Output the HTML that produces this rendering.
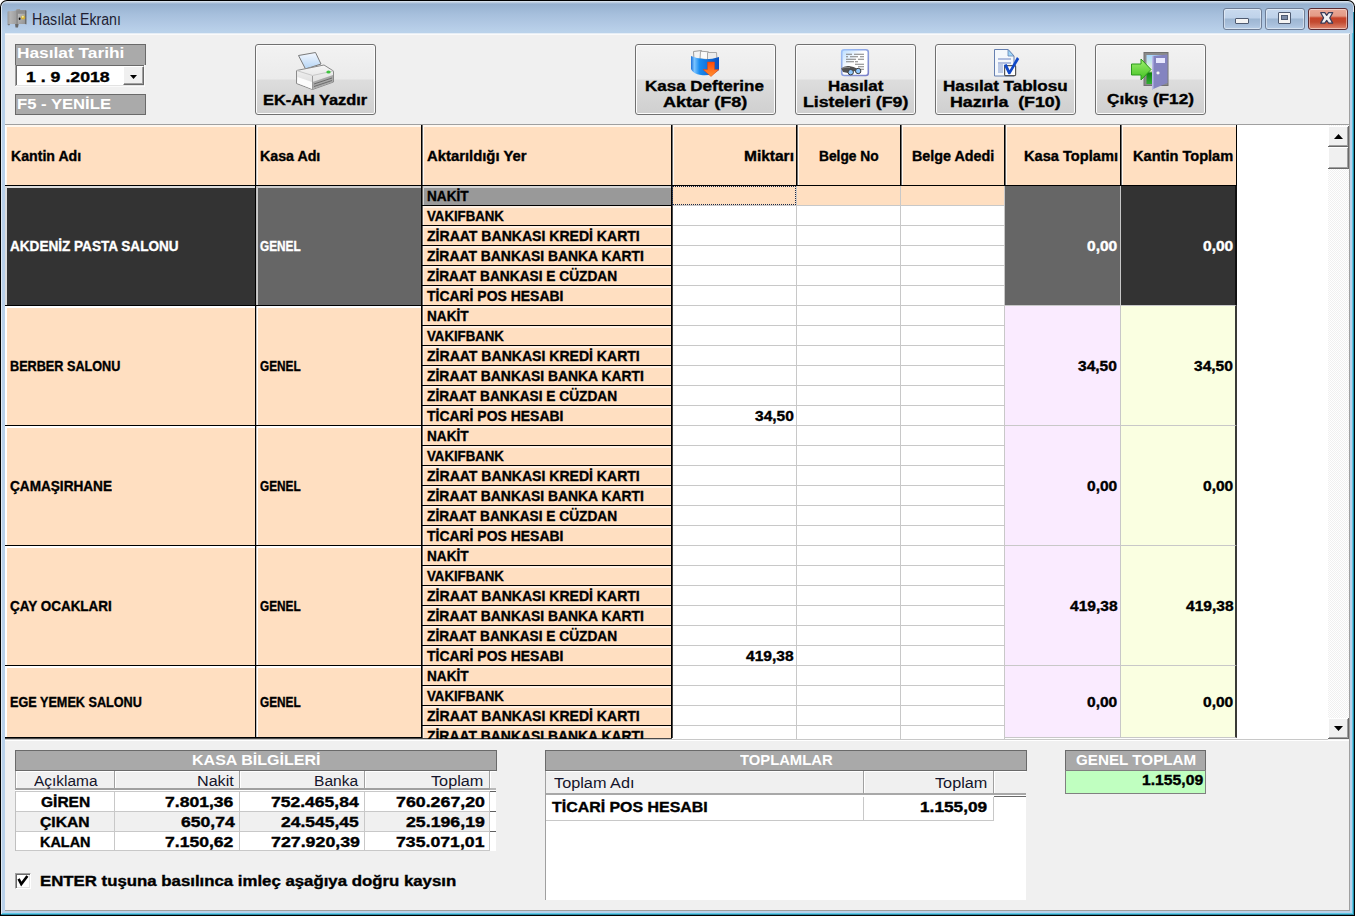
<!DOCTYPE html><html><head><meta charset="utf-8"><style>html,body{margin:0;padding:0;width:1355px;height:916px;overflow:hidden;background:#fff}body div,body svg{position:absolute}body{font-family:'Liberation Sans',sans-serif}</style></head><body>
<div style="left:0;top:0;width:1355px;height:916px;background:#000;border-radius:7px 7px 0 0"></div>
<div style="left:1px;top:1px;width:1353px;height:914px;background:#d5e0ec;border-radius:6px 6px 0 0"></div>
<div style="left:2px;top:2px;width:1351px;height:913px;background:#b9d1ea;border-radius:5px 5px 0 0"></div>
<div style="left:1352px;top:24px;width:1px;height:890px;background:#5ec8e6"></div>
<div style="left:1353px;top:12px;width:1px;height:903px;background:#2a8ca8"></div>
<div style="left:2px;top:913px;width:1351px;height:1px;background:#5ec8e6"></div>
<div style="left:1px;top:914px;width:1353px;height:1px;background:#2a8ca8"></div>
<div style="left:0px;top:915px;width:1355px;height:1px;background:#000"></div>
<div style="left:1354px;top:6px;width:1px;height:910px;background:#000"></div>
<div style="left:1px;top:6px;width:1px;height:908px;background:#dfe8f1"></div>
<div style="left:2px;top:2px;width:1351px;height:31px;border-radius:5px 5px 0 0;background:linear-gradient(#c9d7e6 0px,#97b1cf 2px,#a6bfdc 12px,#b4cbe6 24px,#bad2ea 30px)"></div>
<div style="left:5px;top:33px;width:1345px;height:1px;background:#e6eef6"></div>
<svg style="left:6px;top:8px" width="22" height="21" viewBox="0 0 22 21">
<defs>
<linearGradient id="sg" x1="0" x2="1"><stop offset="0" stop-color="#9a9a9a"/><stop offset=".15" stop-color="#b4b4b4"/><stop offset=".5" stop-color="#9c9c9c"/><stop offset="1" stop-color="#8a8a8a"/></linearGradient>
<linearGradient id="sd" x1="0" y1="0" x2="1" y2="1"><stop offset="0" stop-color="#bcbcbc"/><stop offset="1" stop-color="#949494"/></linearGradient>
</defs>
<path d="M9 15.8 L12.7 15.8 L12 19.5 L9.5 19.5 Z" fill="#6a6a6a"/>
<path d="M1.5 16 L4 16 L3.5 17.3 L2 17.3 Z" fill="#7a7a7a"/>
<path d="M1.5 4 Q1.5 3.2 2.5 3.2 L8 3 L10.3 2.2 L10.5 1 L14 1 L14.3 2.2 L19.5 2.2 Q20.3 2.2 20.3 3 L20.3 16 L1.5 16 Z" fill="url(#sg)"/>
<path d="M10.3 2.6 L20 2.3 L20 16 L10.3 16 Z" fill="#8e8e8e"/>
<rect x="12" y="5.8" width="6.8" height="10.2" fill="url(#sd)"/>
<path d="M19.3 2.5 L20.3 2.5 L20.3 16.5 L19.3 16 Z" fill="#5e5e5e"/>
<ellipse cx="13.6" cy="10.8" rx=".9" ry="1.3" fill="#111"/>
<circle cx="17.1" cy="9.4" r="2" fill="#d8b030"/>
<circle cx="16.8" cy="8.8" r="1" fill="#f4eea0"/>
</svg>
<div style="left:1223px;top:8px;width:37px;height:20px;border:1px solid #6e7d95;border-radius:3px;background:linear-gradient(#c9daee 0px,#bed2ea 9px,#9db6d2 10px,#a9c0dc 16px,#bcd2ea 21px);box-shadow:inset 0 0 0 1px rgba(255,255,255,.45)"></div>
<div style="left:1265px;top:8px;width:38px;height:20px;border:1px solid #6e7d95;border-radius:3px;background:linear-gradient(#c9daee 0px,#bed2ea 9px,#9db6d2 10px,#a9c0dc 16px,#bcd2ea 21px);box-shadow:inset 0 0 0 1px rgba(255,255,255,.45)"></div>
<div style="left:1308px;top:8px;width:38px;height:20px;border:1px solid #5a2b32;border-radius:3px;background:linear-gradient(#eaa998 0px,#e49a86 7px,#c7432a 9px,#c24a30 13px,#d8775f 18px,#e79a84 21px);box-shadow:inset 0 0 0 1px rgba(255,255,255,.45)"></div>
<div style="left:1235px;top:18px;width:12px;height:4px;background:#f4f4f4;border:1px solid #4e5a70;border-radius:1px"></div>
<div style="left:1278px;top:12px;width:11px;height:10px;border:1px solid #4e5a70;background:#f4f4f4;border-radius:1px"></div>
<div style="left:1281px;top:15px;width:5px;height:3px;background:#7d8ca6;border:1px solid #4e5a70"></div>
<svg style="left:1316px;top:8px" width="22" height="20" viewBox="0 0 22 20">
<g transform="translate(10.7 9.9)">
<path d="M-6 -5.2 L-1.9 -5.2 L0 -2.5 L1.9 -5.2 L6 -5.2 L3.1 0 L6 5.2 L1.9 5.2 L0 2.5 L-1.9 5.2 L-6 5.2 L-3.1 0 Z" fill="#f2f2f2" stroke="#3c3c58" stroke-width="1.2" stroke-linejoin="round"/>
</g></svg>
<div style="left:5px;top:34px;width:1345px;height:877px;background:#f0f0f0"></div>
<div style="left:1349px;top:34px;width:1px;height:877px;background:#a0a0a0"></div>
<div style="left:5px;top:910px;width:1345px;height:1px;background:#a0a0a0"></div>
<div style="left:5px;top:34px;width:1344px;height:1px;background:#fafafa"></div>
<div style="left:15px;top:44px;width:129px;height:20px;background:#aaaaaa;border:1px solid #6a6a6a;border-bottom:none"></div>
<div style="left:15px;top:65px;width:129px;height:21px;background:#fff"></div>
<div style="left:15px;top:65px;width:129px;height:1px;background:#696969"></div>
<div style="left:15px;top:65px;width:1px;height:21px;background:#a0a0a0"></div>
<div style="left:16px;top:66px;width:1px;height:19px;background:#696969"></div>
<div style="left:16px;top:85px;width:128px;height:1px;background:#e3e3e3"></div>
<div style="left:15px;top:86px;width:130px;height:1px;background:#fafafa"></div>
<div style="left:144px;top:65px;width:1px;height:22px;background:#fafafa"></div>
<div style="left:123px;top:66px;width:21px;height:19px;background:#f0f0f0;box-sizing:border-box;border-top:1px solid #fff;border-left:1px solid #fff;border-right:1px solid #696969;border-bottom:1px solid #696969;box-shadow:inset -1px -1px 0 #a0a0a0"></div>
<svg style="left:130px;top:75px" width="8" height="5" viewBox="0 0 8 5"><path d="M0 0 H7 L3.5 4 Z" fill="#000"/></svg>
<div style="left:15px;top:94px;width:129px;height:19px;background:#aaaaaa;border:1px solid #6a6a6a"></div>
<div style="left:255px;top:44px;width:119px;height:69px;border:1px solid #707070;border-radius:3px;background:linear-gradient(#f2f2f2 0px,#ebebeb 34px,#dddddd 35px,#cfcfcf 69px);box-shadow:inset 0 0 0 1px #fcfcfc"></div>
<div style="left:635px;top:44px;width:139px;height:69px;border:1px solid #707070;border-radius:3px;background:linear-gradient(#f2f2f2 0px,#ebebeb 34px,#dddddd 35px,#cfcfcf 69px);box-shadow:inset 0 0 0 1px #fcfcfc"></div>
<div style="left:795px;top:44px;width:119px;height:69px;border:1px solid #707070;border-radius:3px;background:linear-gradient(#f2f2f2 0px,#ebebeb 34px,#dddddd 35px,#cfcfcf 69px);box-shadow:inset 0 0 0 1px #fcfcfc"></div>
<div style="left:935px;top:44px;width:139px;height:69px;border:1px solid #707070;border-radius:3px;background:linear-gradient(#f2f2f2 0px,#ebebeb 34px,#dddddd 35px,#cfcfcf 69px);box-shadow:inset 0 0 0 1px #fcfcfc"></div>
<div style="left:1095px;top:44px;width:109px;height:69px;border:1px solid #707070;border-radius:3px;background:linear-gradient(#f2f2f2 0px,#ebebeb 34px,#dddddd 35px,#cfcfcf 69px);box-shadow:inset 0 0 0 1px #fcfcfc"></div>
<svg style="left:294px;top:50px" width="42" height="42" viewBox="0 0 42 42">
<defs>
<linearGradient id="pp" x1="0" y1="0" x2="0" y2="1"><stop offset="0" stop-color="#f4f8ff"/><stop offset="1" stop-color="#b4d4f4"/></linearGradient>
<linearGradient id="pb" x1="0" y1="0" x2="0" y2="1"><stop offset="0" stop-color="#f6f6f6"/><stop offset="1" stop-color="#d6d6d6"/></linearGradient>
</defs>
<path d="M4.5 5.5 L21.5 2.5 L27 14 L11.5 19 Z" fill="url(#pp)" stroke="#7a7a7a" stroke-width="1"/>
<path d="M2.5 20.5 L30 15 L39.5 21 L39.5 32 L18.5 39.5 L2.5 33.5 Z" fill="url(#pb)" stroke="#8a8a8a" stroke-width="1"/>
<path d="M2.5 20.5 L18.5 25.5 L39.5 21" fill="none" stroke="#c8c8c8" stroke-width="1"/>
<path d="M3.5 27 L18 32 L18 39 L3 33 Z" fill="#fcfcfc"/>
<path d="M18.5 32 L39 25 L39 32 L18.5 39 Z" fill="#a8a8a8"/>
<path d="M20 34 L38 28 M20 36.5 L38 30.5" stroke="#6c6c6c" stroke-width="1"/>
<path d="M18.5 26 L18.5 39.5" stroke="#9a9a9a" stroke-width="1"/>
<ellipse cx="34.5" cy="22" rx="2.2" ry="1.6" fill="#3ec43e"/>
</svg>
<svg style="left:689px;top:48px" width="32" height="30" viewBox="0 0 32 30">
<defs>
<linearGradient id="kb" x1="0" y1="0" x2="1" y2="0"><stop offset="0" stop-color="#1c6fd8"/><stop offset=".12" stop-color="#7cc4ff"/><stop offset=".3" stop-color="#1a8cf0"/><stop offset="1" stop-color="#0a50c0"/></linearGradient>
<linearGradient id="ka" x1="0" y1="0" x2="0" y2="1"><stop offset="0" stop-color="#ff4a08"/><stop offset="1" stop-color="#ff9030"/></linearGradient>
</defs>
<path d="M4.5 3.5 L12.5 2.5 L13 11 L5 12 Z" fill="#f4f4f4" stroke="#9c9c9c" stroke-width="1"/>
<path d="M11.5 3.2 L19.5 3.8 L19 11.5 L11 11 Z" fill="#fafafa" stroke="#a4a4a4" stroke-width="1"/>
<path d="M18.5 4.5 L27.5 4.5 L28 12 L18.5 12 Z" fill="#ececec" stroke="#a8a8a8" stroke-width="1"/>
<path d="M2 8 Q15 14 30 9 L30 22 Q22 28.5 12 27 Q4 26 2 21 Z" fill="url(#kb)"/>
<path d="M18.5 14 L25.5 14 L25.5 21.5 L30 21.5 L22 28.5 L14 21.5 L18.5 21.5 Z" fill="url(#ka)" stroke="#e04010" stroke-width=".5"/>
</svg>
<svg style="left:840px;top:48px" width="31" height="30" viewBox="0 0 31 30">
<defs><linearGradient id="ld" x1="0" y1="0" x2="1" y2="1"><stop offset="0" stop-color="#b8dcff"/><stop offset=".45" stop-color="#ffffff"/></linearGradient>
<linearGradient id="lb" x1="0" y1="0" x2="1" y2="1"><stop offset="0" stop-color="#9cc0f8"/><stop offset="1" stop-color="#7a80c8"/></linearGradient></defs>
<rect x="1.7" y="1.7" width="26.6" height="25.8" rx="2.5" fill="url(#ld)" stroke="url(#lb)" stroke-width="1.6"/>
<path d="M6 6.2 H12 M14 6.2 H24 M6 8.7 H8 M10 8.7 H18 M20 8.7 H24 M6 11.3 H16 M18 11.3 H24 M6 13.7 H14 M15 13.7 H18 M15 16.3 H24 M18 18.8 H24 M20 21.3 H24" stroke="#808080" stroke-width="1.1"/>
<path d="M1.2 20.5 Q4 17.5 9 18 Q14 18.5 17 20.5 L15 23 L8 25 L3 24 Z" fill="#505050"/>
<path d="M2 20 Q6 19 10 19.5" stroke="#9a9a9a" stroke-width=".8" fill="none"/>
<circle cx="10.7" cy="24.2" r="2.7" fill="#90c8ff" stroke="#3a3a3a" stroke-width="1"/>
<circle cx="18.2" cy="23" r="2.7" fill="#90c8ff" stroke="#3a3a3a" stroke-width="1"/>
</svg>
<svg style="left:992px;top:48px" width="30" height="30" viewBox="0 0 30 30">
<path d="M2.5 1.5 L16 1.5 L22 8 L22 28 L2.5 28 Z" fill="#f4f8fc" stroke="#6680b0" stroke-width="1"/>
<path d="M16 1.5 L16 8 L22 8 Z" fill="#9fd8f8" stroke="#6680b0" stroke-width=".8"/>
<path d="M6 11 H19 M6 15 H19" stroke="#b0bedf" stroke-width="2"/>
<rect x="6" y="16" width="5" height="9" fill="#bccae6"/>
<rect x="12.6" y="17.6" width="11" height="10" rx=".8" fill="#fff" stroke="#555" stroke-width="1.2"/>
<path d="M11.8 17 L14.6 16 L17.6 22.2 L25 9 L27.2 11 L18.2 26.2 L16.4 26.2 Z" fill="#1048c8"/>
</svg>
<svg style="left:1130px;top:51px" width="40" height="40" viewBox="0 0 40 40">
<defs>
<linearGradient id="ga" x1="0" y1="0" x2="0" y2="1"><stop offset="0" stop-color="#a0f070"/><stop offset="1" stop-color="#40c020"/></linearGradient>
<linearGradient id="op" x1="0" y1="0" x2="0" y2="1"><stop offset="0" stop-color="#a8d8ff"/><stop offset=".55" stop-color="#f0f8d0"/><stop offset=".62" stop-color="#108010"/><stop offset="1" stop-color="#30b030"/></linearGradient>
</defs>
<rect x="14" y="1.5" width="24" height="33" fill="#8a8a8a" stroke="#707070"/>
<rect x="16.5" y="4" width="19" height="29" fill="url(#op)"/>
<path d="M22 5 L37.5 3.5 L37.5 32 L22 38.5 Z" fill="#8484c0"/>
<path d="M22 5 L23.5 5 L23.5 38 L22 38.5 Z" fill="#b8b8e8"/>
<rect x="26" y="7" width="9" height="5" fill="#e8e8ff"/>
<ellipse cx="28" cy="22" rx="1.6" ry="1.4" fill="#f4f4f4"/>
<path d="M1.5 13 L11 13 L11 8 L21 18.5 L11 29 L11 24 L1.5 24 Z" fill="url(#ga)" stroke="#2c9a1c" stroke-width="1"/>
</svg>
<div style="left:5px;top:124px;width:1345px;height:1px;background:#a0a0a0"></div>
<div style="left:5px;top:125px;width:1323px;height:614px;background:#fff"></div>
<div style="left:5px;top:125px;width:1344px;height:614px;overflow:hidden" id="g">
<div style="left:0px;top:0px;width:251px;height:61px;background:#ffdfc1;border-right:1px solid #000;border-bottom:1px solid #000;box-sizing:border-box;box-shadow:inset 1px 0 0 #ffffff,inset 2px 2px 0 #fff8f0"></div>
<div style="left:251px;top:0px;width:166px;height:61px;background:#ffdfc1;border-right:1px solid #000;border-bottom:1px solid #000;box-sizing:border-box;box-shadow:inset 1px 0 0 #c8c8c8,inset 2px 2px 0 #fff8f0"></div>
<div style="left:417px;top:0px;width:250px;height:61px;background:#ffdfc1;border-right:1px solid #000;border-bottom:1px solid #000;box-sizing:border-box;box-shadow:inset 1px 0 0 #707070,inset 2px 2px 0 #fff8f0"></div>
<div style="left:667px;top:0px;width:125px;height:61px;background:#ffdfc1;border-right:1px solid #000;border-bottom:1px solid #000;box-sizing:border-box;box-shadow:inset 1px 0 0 #707070,inset 2px 2px 0 #fff8f0"></div>
<div style="left:792px;top:0px;width:104px;height:61px;background:#ffdfc1;border-right:1px solid #000;border-bottom:1px solid #000;box-sizing:border-box;box-shadow:inset 1px 0 0 #707070,inset 2px 2px 0 #fff8f0"></div>
<div style="left:896px;top:0px;width:104px;height:61px;background:#ffdfc1;border-right:1px solid #000;border-bottom:1px solid #000;box-sizing:border-box;box-shadow:inset 1px 0 0 #707070,inset 2px 2px 0 #fff8f0"></div>
<div style="left:1000px;top:0px;width:116px;height:61px;background:#ffdfc1;border-right:1px solid #000;border-bottom:1px solid #000;box-sizing:border-box;box-shadow:inset 1px 0 0 #707070,inset 2px 2px 0 #fff8f0"></div>
<div style="left:1116px;top:0px;width:116px;height:61px;background:#ffdfc1;border-right:1px solid #000;border-bottom:1px solid #000;box-sizing:border-box;box-shadow:inset 1px 0 0 #707070,inset 2px 2px 0 #fff8f0"></div>
<div style="left:667px;top:61px;width:125px;height:20px;background:#ffdfc1;border-right:1px solid #c8c8c8;border-bottom:1px solid #c8c8c8;box-sizing:border-box"></div>
<div style="left:792px;top:61px;width:104px;height:20px;background:#ffdfc1;border-right:1px solid #c8c8c8;border-bottom:1px solid #c8c8c8;box-sizing:border-box"></div>
<div style="left:896px;top:61px;width:104px;height:20px;background:#ffdfc1;border-right:1px solid #c8c8c8;border-bottom:1px solid #c8c8c8;box-sizing:border-box"></div>
<div style="left:417px;top:61px;width:250px;height:20px;background:#999999;border-right:1px solid #000;border-bottom:1px solid #000;box-sizing:border-box;box-shadow:inset 1px 0 0 #606060,inset 2px 2px 0 #d4d4d4"></div>
<div style="left:667px;top:81px;width:125px;height:20px;background:#fff;border-right:1px solid #c8c8c8;border-bottom:1px solid #c8c8c8;box-sizing:border-box"></div>
<div style="left:792px;top:81px;width:104px;height:20px;background:#fff;border-right:1px solid #c8c8c8;border-bottom:1px solid #c8c8c8;box-sizing:border-box"></div>
<div style="left:896px;top:81px;width:104px;height:20px;background:#fff;border-right:1px solid #c8c8c8;border-bottom:1px solid #c8c8c8;box-sizing:border-box"></div>
<div style="left:417px;top:81px;width:250px;height:20px;background:#ffdfc1;border-right:1px solid #000;border-bottom:1px solid #000;box-sizing:border-box;box-shadow:inset 1px 0 0 #606060,inset 2px 2px 0 #fff1e4"></div>
<div style="left:667px;top:101px;width:125px;height:20px;background:#fff;border-right:1px solid #c8c8c8;border-bottom:1px solid #c8c8c8;box-sizing:border-box"></div>
<div style="left:792px;top:101px;width:104px;height:20px;background:#fff;border-right:1px solid #c8c8c8;border-bottom:1px solid #c8c8c8;box-sizing:border-box"></div>
<div style="left:896px;top:101px;width:104px;height:20px;background:#fff;border-right:1px solid #c8c8c8;border-bottom:1px solid #c8c8c8;box-sizing:border-box"></div>
<div style="left:417px;top:101px;width:250px;height:20px;background:#ffdfc1;border-right:1px solid #000;border-bottom:1px solid #000;box-sizing:border-box;box-shadow:inset 1px 0 0 #606060,inset 2px 2px 0 #fff1e4"></div>
<div style="left:667px;top:121px;width:125px;height:20px;background:#fff;border-right:1px solid #c8c8c8;border-bottom:1px solid #c8c8c8;box-sizing:border-box"></div>
<div style="left:792px;top:121px;width:104px;height:20px;background:#fff;border-right:1px solid #c8c8c8;border-bottom:1px solid #c8c8c8;box-sizing:border-box"></div>
<div style="left:896px;top:121px;width:104px;height:20px;background:#fff;border-right:1px solid #c8c8c8;border-bottom:1px solid #c8c8c8;box-sizing:border-box"></div>
<div style="left:417px;top:121px;width:250px;height:20px;background:#ffdfc1;border-right:1px solid #000;border-bottom:1px solid #000;box-sizing:border-box;box-shadow:inset 1px 0 0 #606060,inset 2px 2px 0 #fff1e4"></div>
<div style="left:667px;top:141px;width:125px;height:20px;background:#fff;border-right:1px solid #c8c8c8;border-bottom:1px solid #c8c8c8;box-sizing:border-box"></div>
<div style="left:792px;top:141px;width:104px;height:20px;background:#fff;border-right:1px solid #c8c8c8;border-bottom:1px solid #c8c8c8;box-sizing:border-box"></div>
<div style="left:896px;top:141px;width:104px;height:20px;background:#fff;border-right:1px solid #c8c8c8;border-bottom:1px solid #c8c8c8;box-sizing:border-box"></div>
<div style="left:417px;top:141px;width:250px;height:20px;background:#ffdfc1;border-right:1px solid #000;border-bottom:1px solid #000;box-sizing:border-box;box-shadow:inset 1px 0 0 #606060,inset 2px 2px 0 #fff1e4"></div>
<div style="left:667px;top:161px;width:125px;height:20px;background:#fff;border-right:1px solid #c8c8c8;border-bottom:1px solid #c8c8c8;box-sizing:border-box"></div>
<div style="left:792px;top:161px;width:104px;height:20px;background:#fff;border-right:1px solid #c8c8c8;border-bottom:1px solid #c8c8c8;box-sizing:border-box"></div>
<div style="left:896px;top:161px;width:104px;height:20px;background:#fff;border-right:1px solid #c8c8c8;border-bottom:1px solid #c8c8c8;box-sizing:border-box"></div>
<div style="left:417px;top:161px;width:250px;height:20px;background:#ffdfc1;border-right:1px solid #000;border-bottom:1px solid #000;box-sizing:border-box;box-shadow:inset 1px 0 0 #606060,inset 2px 2px 0 #fff1e4"></div>
<div style="left:667px;top:181px;width:125px;height:20px;background:#fff;border-right:1px solid #c8c8c8;border-bottom:1px solid #c8c8c8;box-sizing:border-box"></div>
<div style="left:792px;top:181px;width:104px;height:20px;background:#fff;border-right:1px solid #c8c8c8;border-bottom:1px solid #c8c8c8;box-sizing:border-box"></div>
<div style="left:896px;top:181px;width:104px;height:20px;background:#fff;border-right:1px solid #c8c8c8;border-bottom:1px solid #c8c8c8;box-sizing:border-box"></div>
<div style="left:417px;top:181px;width:250px;height:20px;background:#ffdfc1;border-right:1px solid #000;border-bottom:1px solid #000;box-sizing:border-box;box-shadow:inset 1px 0 0 #606060,inset 2px 2px 0 #fff1e4"></div>
<div style="left:667px;top:201px;width:125px;height:20px;background:#fff;border-right:1px solid #c8c8c8;border-bottom:1px solid #c8c8c8;box-sizing:border-box"></div>
<div style="left:792px;top:201px;width:104px;height:20px;background:#fff;border-right:1px solid #c8c8c8;border-bottom:1px solid #c8c8c8;box-sizing:border-box"></div>
<div style="left:896px;top:201px;width:104px;height:20px;background:#fff;border-right:1px solid #c8c8c8;border-bottom:1px solid #c8c8c8;box-sizing:border-box"></div>
<div style="left:417px;top:201px;width:250px;height:20px;background:#ffdfc1;border-right:1px solid #000;border-bottom:1px solid #000;box-sizing:border-box;box-shadow:inset 1px 0 0 #606060,inset 2px 2px 0 #fff1e4"></div>
<div style="left:667px;top:221px;width:125px;height:20px;background:#fff;border-right:1px solid #c8c8c8;border-bottom:1px solid #c8c8c8;box-sizing:border-box"></div>
<div style="left:792px;top:221px;width:104px;height:20px;background:#fff;border-right:1px solid #c8c8c8;border-bottom:1px solid #c8c8c8;box-sizing:border-box"></div>
<div style="left:896px;top:221px;width:104px;height:20px;background:#fff;border-right:1px solid #c8c8c8;border-bottom:1px solid #c8c8c8;box-sizing:border-box"></div>
<div style="left:417px;top:221px;width:250px;height:20px;background:#ffdfc1;border-right:1px solid #000;border-bottom:1px solid #000;box-sizing:border-box;box-shadow:inset 1px 0 0 #606060,inset 2px 2px 0 #fff1e4"></div>
<div style="left:667px;top:241px;width:125px;height:20px;background:#fff;border-right:1px solid #c8c8c8;border-bottom:1px solid #c8c8c8;box-sizing:border-box"></div>
<div style="left:792px;top:241px;width:104px;height:20px;background:#fff;border-right:1px solid #c8c8c8;border-bottom:1px solid #c8c8c8;box-sizing:border-box"></div>
<div style="left:896px;top:241px;width:104px;height:20px;background:#fff;border-right:1px solid #c8c8c8;border-bottom:1px solid #c8c8c8;box-sizing:border-box"></div>
<div style="left:417px;top:241px;width:250px;height:20px;background:#ffdfc1;border-right:1px solid #000;border-bottom:1px solid #000;box-sizing:border-box;box-shadow:inset 1px 0 0 #606060,inset 2px 2px 0 #fff1e4"></div>
<div style="left:667px;top:261px;width:125px;height:20px;background:#fff;border-right:1px solid #c8c8c8;border-bottom:1px solid #c8c8c8;box-sizing:border-box"></div>
<div style="left:792px;top:261px;width:104px;height:20px;background:#fff;border-right:1px solid #c8c8c8;border-bottom:1px solid #c8c8c8;box-sizing:border-box"></div>
<div style="left:896px;top:261px;width:104px;height:20px;background:#fff;border-right:1px solid #c8c8c8;border-bottom:1px solid #c8c8c8;box-sizing:border-box"></div>
<div style="left:417px;top:261px;width:250px;height:20px;background:#ffdfc1;border-right:1px solid #000;border-bottom:1px solid #000;box-sizing:border-box;box-shadow:inset 1px 0 0 #606060,inset 2px 2px 0 #fff1e4"></div>
<div style="left:667px;top:281px;width:125px;height:20px;background:#fff;border-right:1px solid #c8c8c8;border-bottom:1px solid #c8c8c8;box-sizing:border-box"></div>
<div style="left:792px;top:281px;width:104px;height:20px;background:#fff;border-right:1px solid #c8c8c8;border-bottom:1px solid #c8c8c8;box-sizing:border-box"></div>
<div style="left:896px;top:281px;width:104px;height:20px;background:#fff;border-right:1px solid #c8c8c8;border-bottom:1px solid #c8c8c8;box-sizing:border-box"></div>
<div style="left:417px;top:281px;width:250px;height:20px;background:#ffdfc1;border-right:1px solid #000;border-bottom:1px solid #000;box-sizing:border-box;box-shadow:inset 1px 0 0 #606060,inset 2px 2px 0 #fff1e4"></div>
<div style="left:667px;top:301px;width:125px;height:20px;background:#fff;border-right:1px solid #c8c8c8;border-bottom:1px solid #c8c8c8;box-sizing:border-box"></div>
<div style="left:792px;top:301px;width:104px;height:20px;background:#fff;border-right:1px solid #c8c8c8;border-bottom:1px solid #c8c8c8;box-sizing:border-box"></div>
<div style="left:896px;top:301px;width:104px;height:20px;background:#fff;border-right:1px solid #c8c8c8;border-bottom:1px solid #c8c8c8;box-sizing:border-box"></div>
<div style="left:417px;top:301px;width:250px;height:20px;background:#ffdfc1;border-right:1px solid #000;border-bottom:1px solid #000;box-sizing:border-box;box-shadow:inset 1px 0 0 #606060,inset 2px 2px 0 #fff1e4"></div>
<div style="left:667px;top:321px;width:125px;height:20px;background:#fff;border-right:1px solid #c8c8c8;border-bottom:1px solid #c8c8c8;box-sizing:border-box"></div>
<div style="left:792px;top:321px;width:104px;height:20px;background:#fff;border-right:1px solid #c8c8c8;border-bottom:1px solid #c8c8c8;box-sizing:border-box"></div>
<div style="left:896px;top:321px;width:104px;height:20px;background:#fff;border-right:1px solid #c8c8c8;border-bottom:1px solid #c8c8c8;box-sizing:border-box"></div>
<div style="left:417px;top:321px;width:250px;height:20px;background:#ffdfc1;border-right:1px solid #000;border-bottom:1px solid #000;box-sizing:border-box;box-shadow:inset 1px 0 0 #606060,inset 2px 2px 0 #fff1e4"></div>
<div style="left:667px;top:341px;width:125px;height:20px;background:#fff;border-right:1px solid #c8c8c8;border-bottom:1px solid #c8c8c8;box-sizing:border-box"></div>
<div style="left:792px;top:341px;width:104px;height:20px;background:#fff;border-right:1px solid #c8c8c8;border-bottom:1px solid #c8c8c8;box-sizing:border-box"></div>
<div style="left:896px;top:341px;width:104px;height:20px;background:#fff;border-right:1px solid #c8c8c8;border-bottom:1px solid #c8c8c8;box-sizing:border-box"></div>
<div style="left:417px;top:341px;width:250px;height:20px;background:#ffdfc1;border-right:1px solid #000;border-bottom:1px solid #000;box-sizing:border-box;box-shadow:inset 1px 0 0 #606060,inset 2px 2px 0 #fff1e4"></div>
<div style="left:667px;top:361px;width:125px;height:20px;background:#fff;border-right:1px solid #c8c8c8;border-bottom:1px solid #c8c8c8;box-sizing:border-box"></div>
<div style="left:792px;top:361px;width:104px;height:20px;background:#fff;border-right:1px solid #c8c8c8;border-bottom:1px solid #c8c8c8;box-sizing:border-box"></div>
<div style="left:896px;top:361px;width:104px;height:20px;background:#fff;border-right:1px solid #c8c8c8;border-bottom:1px solid #c8c8c8;box-sizing:border-box"></div>
<div style="left:417px;top:361px;width:250px;height:20px;background:#ffdfc1;border-right:1px solid #000;border-bottom:1px solid #000;box-sizing:border-box;box-shadow:inset 1px 0 0 #606060,inset 2px 2px 0 #fff1e4"></div>
<div style="left:667px;top:381px;width:125px;height:20px;background:#fff;border-right:1px solid #c8c8c8;border-bottom:1px solid #c8c8c8;box-sizing:border-box"></div>
<div style="left:792px;top:381px;width:104px;height:20px;background:#fff;border-right:1px solid #c8c8c8;border-bottom:1px solid #c8c8c8;box-sizing:border-box"></div>
<div style="left:896px;top:381px;width:104px;height:20px;background:#fff;border-right:1px solid #c8c8c8;border-bottom:1px solid #c8c8c8;box-sizing:border-box"></div>
<div style="left:417px;top:381px;width:250px;height:20px;background:#ffdfc1;border-right:1px solid #000;border-bottom:1px solid #000;box-sizing:border-box;box-shadow:inset 1px 0 0 #606060,inset 2px 2px 0 #fff1e4"></div>
<div style="left:667px;top:401px;width:125px;height:20px;background:#fff;border-right:1px solid #c8c8c8;border-bottom:1px solid #c8c8c8;box-sizing:border-box"></div>
<div style="left:792px;top:401px;width:104px;height:20px;background:#fff;border-right:1px solid #c8c8c8;border-bottom:1px solid #c8c8c8;box-sizing:border-box"></div>
<div style="left:896px;top:401px;width:104px;height:20px;background:#fff;border-right:1px solid #c8c8c8;border-bottom:1px solid #c8c8c8;box-sizing:border-box"></div>
<div style="left:417px;top:401px;width:250px;height:20px;background:#ffdfc1;border-right:1px solid #000;border-bottom:1px solid #000;box-sizing:border-box;box-shadow:inset 1px 0 0 #606060,inset 2px 2px 0 #fff1e4"></div>
<div style="left:667px;top:421px;width:125px;height:20px;background:#fff;border-right:1px solid #c8c8c8;border-bottom:1px solid #c8c8c8;box-sizing:border-box"></div>
<div style="left:792px;top:421px;width:104px;height:20px;background:#fff;border-right:1px solid #c8c8c8;border-bottom:1px solid #c8c8c8;box-sizing:border-box"></div>
<div style="left:896px;top:421px;width:104px;height:20px;background:#fff;border-right:1px solid #c8c8c8;border-bottom:1px solid #c8c8c8;box-sizing:border-box"></div>
<div style="left:417px;top:421px;width:250px;height:20px;background:#ffdfc1;border-right:1px solid #000;border-bottom:1px solid #000;box-sizing:border-box;box-shadow:inset 1px 0 0 #606060,inset 2px 2px 0 #fff1e4"></div>
<div style="left:667px;top:441px;width:125px;height:20px;background:#fff;border-right:1px solid #c8c8c8;border-bottom:1px solid #c8c8c8;box-sizing:border-box"></div>
<div style="left:792px;top:441px;width:104px;height:20px;background:#fff;border-right:1px solid #c8c8c8;border-bottom:1px solid #c8c8c8;box-sizing:border-box"></div>
<div style="left:896px;top:441px;width:104px;height:20px;background:#fff;border-right:1px solid #c8c8c8;border-bottom:1px solid #c8c8c8;box-sizing:border-box"></div>
<div style="left:417px;top:441px;width:250px;height:20px;background:#ffdfc1;border-right:1px solid #000;border-bottom:1px solid #000;box-sizing:border-box;box-shadow:inset 1px 0 0 #606060,inset 2px 2px 0 #fff1e4"></div>
<div style="left:667px;top:461px;width:125px;height:20px;background:#fff;border-right:1px solid #c8c8c8;border-bottom:1px solid #c8c8c8;box-sizing:border-box"></div>
<div style="left:792px;top:461px;width:104px;height:20px;background:#fff;border-right:1px solid #c8c8c8;border-bottom:1px solid #c8c8c8;box-sizing:border-box"></div>
<div style="left:896px;top:461px;width:104px;height:20px;background:#fff;border-right:1px solid #c8c8c8;border-bottom:1px solid #c8c8c8;box-sizing:border-box"></div>
<div style="left:417px;top:461px;width:250px;height:20px;background:#ffdfc1;border-right:1px solid #000;border-bottom:1px solid #000;box-sizing:border-box;box-shadow:inset 1px 0 0 #606060,inset 2px 2px 0 #fff1e4"></div>
<div style="left:667px;top:481px;width:125px;height:20px;background:#fff;border-right:1px solid #c8c8c8;border-bottom:1px solid #c8c8c8;box-sizing:border-box"></div>
<div style="left:792px;top:481px;width:104px;height:20px;background:#fff;border-right:1px solid #c8c8c8;border-bottom:1px solid #c8c8c8;box-sizing:border-box"></div>
<div style="left:896px;top:481px;width:104px;height:20px;background:#fff;border-right:1px solid #c8c8c8;border-bottom:1px solid #c8c8c8;box-sizing:border-box"></div>
<div style="left:417px;top:481px;width:250px;height:20px;background:#ffdfc1;border-right:1px solid #000;border-bottom:1px solid #000;box-sizing:border-box;box-shadow:inset 1px 0 0 #606060,inset 2px 2px 0 #fff1e4"></div>
<div style="left:667px;top:501px;width:125px;height:20px;background:#fff;border-right:1px solid #c8c8c8;border-bottom:1px solid #c8c8c8;box-sizing:border-box"></div>
<div style="left:792px;top:501px;width:104px;height:20px;background:#fff;border-right:1px solid #c8c8c8;border-bottom:1px solid #c8c8c8;box-sizing:border-box"></div>
<div style="left:896px;top:501px;width:104px;height:20px;background:#fff;border-right:1px solid #c8c8c8;border-bottom:1px solid #c8c8c8;box-sizing:border-box"></div>
<div style="left:417px;top:501px;width:250px;height:20px;background:#ffdfc1;border-right:1px solid #000;border-bottom:1px solid #000;box-sizing:border-box;box-shadow:inset 1px 0 0 #606060,inset 2px 2px 0 #fff1e4"></div>
<div style="left:667px;top:521px;width:125px;height:20px;background:#fff;border-right:1px solid #c8c8c8;border-bottom:1px solid #c8c8c8;box-sizing:border-box"></div>
<div style="left:792px;top:521px;width:104px;height:20px;background:#fff;border-right:1px solid #c8c8c8;border-bottom:1px solid #c8c8c8;box-sizing:border-box"></div>
<div style="left:896px;top:521px;width:104px;height:20px;background:#fff;border-right:1px solid #c8c8c8;border-bottom:1px solid #c8c8c8;box-sizing:border-box"></div>
<div style="left:417px;top:521px;width:250px;height:20px;background:#ffdfc1;border-right:1px solid #000;border-bottom:1px solid #000;box-sizing:border-box;box-shadow:inset 1px 0 0 #606060,inset 2px 2px 0 #fff1e4"></div>
<div style="left:667px;top:541px;width:125px;height:20px;background:#fff;border-right:1px solid #c8c8c8;border-bottom:1px solid #c8c8c8;box-sizing:border-box"></div>
<div style="left:792px;top:541px;width:104px;height:20px;background:#fff;border-right:1px solid #c8c8c8;border-bottom:1px solid #c8c8c8;box-sizing:border-box"></div>
<div style="left:896px;top:541px;width:104px;height:20px;background:#fff;border-right:1px solid #c8c8c8;border-bottom:1px solid #c8c8c8;box-sizing:border-box"></div>
<div style="left:417px;top:541px;width:250px;height:20px;background:#ffdfc1;border-right:1px solid #000;border-bottom:1px solid #000;box-sizing:border-box;box-shadow:inset 1px 0 0 #606060,inset 2px 2px 0 #fff1e4"></div>
<div style="left:667px;top:561px;width:125px;height:20px;background:#fff;border-right:1px solid #c8c8c8;border-bottom:1px solid #c8c8c8;box-sizing:border-box"></div>
<div style="left:792px;top:561px;width:104px;height:20px;background:#fff;border-right:1px solid #c8c8c8;border-bottom:1px solid #c8c8c8;box-sizing:border-box"></div>
<div style="left:896px;top:561px;width:104px;height:20px;background:#fff;border-right:1px solid #c8c8c8;border-bottom:1px solid #c8c8c8;box-sizing:border-box"></div>
<div style="left:417px;top:561px;width:250px;height:20px;background:#ffdfc1;border-right:1px solid #000;border-bottom:1px solid #000;box-sizing:border-box;box-shadow:inset 1px 0 0 #606060,inset 2px 2px 0 #fff1e4"></div>
<div style="left:667px;top:581px;width:125px;height:20px;background:#fff;border-right:1px solid #c8c8c8;border-bottom:1px solid #c8c8c8;box-sizing:border-box"></div>
<div style="left:792px;top:581px;width:104px;height:20px;background:#fff;border-right:1px solid #c8c8c8;border-bottom:1px solid #c8c8c8;box-sizing:border-box"></div>
<div style="left:896px;top:581px;width:104px;height:20px;background:#fff;border-right:1px solid #c8c8c8;border-bottom:1px solid #c8c8c8;box-sizing:border-box"></div>
<div style="left:417px;top:581px;width:250px;height:20px;background:#ffdfc1;border-right:1px solid #000;border-bottom:1px solid #000;box-sizing:border-box;box-shadow:inset 1px 0 0 #606060,inset 2px 2px 0 #fff1e4"></div>
<div style="left:667px;top:601px;width:125px;height:20px;background:#fff;border-right:1px solid #c8c8c8;border-bottom:1px solid #c8c8c8;box-sizing:border-box"></div>
<div style="left:792px;top:601px;width:104px;height:20px;background:#fff;border-right:1px solid #c8c8c8;border-bottom:1px solid #c8c8c8;box-sizing:border-box"></div>
<div style="left:896px;top:601px;width:104px;height:20px;background:#fff;border-right:1px solid #c8c8c8;border-bottom:1px solid #c8c8c8;box-sizing:border-box"></div>
<div style="left:417px;top:601px;width:250px;height:20px;background:#ffdfc1;border-right:1px solid #000;border-bottom:1px solid #000;box-sizing:border-box;box-shadow:inset 1px 0 0 #606060,inset 2px 2px 0 #fff1e4"></div>
<div style="left:667px;top:61px;width:1px;height:552px;background:#4a4a4a"></div>
<div style="left:667px;top:61px;width:124px;height:19px;border:1px dotted #1a2a4a;box-sizing:border-box"></div>
<div style="left:0px;top:61px;width:251px;height:120px;background:#333333;border-right:1px solid #000;border-bottom:1px solid #000;box-sizing:border-box;box-shadow:inset 2px 2px 0 #ddd"></div>
<div style="left:251px;top:61px;width:166px;height:120px;background:#666666;border-right:1px solid #000;border-bottom:1px solid #000;box-sizing:border-box;box-shadow:inset 1px 0 0 #c0c0c0,inset 2px 2px 0 #ccc"></div>
<div style="left:1000px;top:61px;width:116px;height:120px;background:#666666;border-right:1px solid #c8c8c8;border-bottom:1px solid #c8c8c8;box-sizing:border-box"></div>
<div style="left:1116px;top:61px;width:116px;height:120px;background:#333333;border-right:2px solid #111;border-bottom:1px solid #c8c8c8;box-sizing:border-box"></div>
<div style="left:0px;top:181px;width:251px;height:120px;background:#ffdfc1;border-right:1px solid #000;border-bottom:1px solid #000;box-sizing:border-box;box-shadow:inset 2px 2px 0 #fff"></div>
<div style="left:251px;top:181px;width:166px;height:120px;background:#ffdfc1;border-right:1px solid #000;border-bottom:1px solid #000;box-sizing:border-box;box-shadow:inset 1px 0 0 #c0c0c0,inset 2px 2px 0 #fff"></div>
<div style="left:1000px;top:181px;width:116px;height:120px;background:#faebff;border-right:1px solid #c8c8c8;border-bottom:1px solid #c8c8c8;box-sizing:border-box"></div>
<div style="left:1116px;top:181px;width:116px;height:120px;background:#faffe1;border-right:2px solid #3a3a36;border-bottom:1px solid #c8c8c8;box-sizing:border-box"></div>
<div style="left:0px;top:301px;width:251px;height:120px;background:#ffdfc1;border-right:1px solid #000;border-bottom:1px solid #000;box-sizing:border-box;box-shadow:inset 2px 2px 0 #fff"></div>
<div style="left:251px;top:301px;width:166px;height:120px;background:#ffdfc1;border-right:1px solid #000;border-bottom:1px solid #000;box-sizing:border-box;box-shadow:inset 1px 0 0 #c0c0c0,inset 2px 2px 0 #fff"></div>
<div style="left:1000px;top:301px;width:116px;height:120px;background:#faebff;border-right:1px solid #c8c8c8;border-bottom:1px solid #c8c8c8;box-sizing:border-box"></div>
<div style="left:1116px;top:301px;width:116px;height:120px;background:#faffe1;border-right:2px solid #3a3a36;border-bottom:1px solid #c8c8c8;box-sizing:border-box"></div>
<div style="left:0px;top:421px;width:251px;height:120px;background:#ffdfc1;border-right:1px solid #000;border-bottom:1px solid #000;box-sizing:border-box;box-shadow:inset 2px 2px 0 #fff"></div>
<div style="left:251px;top:421px;width:166px;height:120px;background:#ffdfc1;border-right:1px solid #000;border-bottom:1px solid #000;box-sizing:border-box;box-shadow:inset 1px 0 0 #c0c0c0,inset 2px 2px 0 #fff"></div>
<div style="left:1000px;top:421px;width:116px;height:120px;background:#faebff;border-right:1px solid #c8c8c8;border-bottom:1px solid #c8c8c8;box-sizing:border-box"></div>
<div style="left:1116px;top:421px;width:116px;height:120px;background:#faffe1;border-right:2px solid #3a3a36;border-bottom:1px solid #c8c8c8;box-sizing:border-box"></div>
<div style="left:0px;top:541px;width:251px;height:72px;background:#ffdfc1;border-right:1px solid #000;border-bottom:1px solid #000;box-sizing:border-box;box-shadow:inset 2px 2px 0 #fff"></div>
<div style="left:251px;top:541px;width:166px;height:72px;background:#ffdfc1;border-right:1px solid #000;border-bottom:1px solid #000;box-sizing:border-box;box-shadow:inset 1px 0 0 #c0c0c0,inset 2px 2px 0 #fff"></div>
<div style="left:1000px;top:541px;width:116px;height:72px;background:#faebff;border-right:1px solid #c8c8c8;border-bottom:1px solid #c8c8c8;box-sizing:border-box"></div>
<div style="left:1116px;top:541px;width:116px;height:72px;background:#faffe1;border-right:2px solid #3a3a36;border-bottom:1px solid #c8c8c8;box-sizing:border-box"></div>
<div style="left:0px;top:613px;width:667px;height:1px;background:#484848"></div>
<div style="left:1323px;top:0px;width:21px;height:613px;background:repeating-conic-gradient(#f0f0f0 0 25%,#ffffff 0 50%) 0 0/2px 2px"></div>
<div style="left:1323px;top:1px;width:21px;height:21px;background:#f0f0f0;box-sizing:border-box;border-right:1px solid #696969;border-bottom:1px solid #696969;box-shadow:inset 1px 1px 0 #fff,inset -1px -1px 0 #a0a0a0"></div>
<div style="left:1323px;top:22px;width:21px;height:22px;background:#f0f0f0;box-sizing:border-box;border-right:1px solid #696969;border-bottom:1px solid #696969;box-shadow:inset 1px 1px 0 #fff,inset -1px -1px 0 #a0a0a0"></div>
<div style="left:1323px;top:593px;width:21px;height:21px;background:#f0f0f0;box-sizing:border-box;border-right:1px solid #696969;border-bottom:1px solid #696969;box-shadow:inset 1px 1px 0 #fff,inset -1px -1px 0 #a0a0a0"></div>
<svg style="left:1329px;top:8px" width="10" height="7" viewBox="0 0 10 7"><path d="M0 6 L4.5 1 L9 6 Z" fill="#000"/></svg>
<svg style="left:1329px;top:601px" width="10" height="7" viewBox="0 0 10 7"><path d="M0 0 L9 0 L4.5 5 Z" fill="#000"/></svg>
<div style="left:5.40px;top:111px;font:bold 14px 'Liberation Sans';line-height:20px;color:#fff;white-space:pre;transform:scaleX(0.9690);transform-origin:0 0;-webkit-text-stroke:0.35px #fff;">AKDENİZ PASTA SALONU</div>
<div style="left:254.80px;top:111px;font:bold 14px 'Liberation Sans';line-height:20px;color:#fff;white-space:pre;transform:scaleX(0.8429);transform-origin:0 0;-webkit-text-stroke:0.35px #fff;">GENEL</div>
<div style="left:1082.33px;top:111px;font:bold 14px 'Liberation Sans';line-height:20px;color:#fff;white-space:pre;transform:scaleX(1.1100);transform-origin:0 0;-webkit-text-stroke:0.35px #fff;">0,00</div>
<div style="left:1198.33px;top:111px;font:bold 14px 'Liberation Sans';line-height:20px;color:#fff;white-space:pre;transform:scaleX(1.1100);transform-origin:0 0;-webkit-text-stroke:0.35px #fff;">0,00</div>
<div style="left:5.40px;top:231px;font:bold 14px 'Liberation Sans';line-height:20px;color:#000;white-space:pre;transform:scaleX(0.9041);transform-origin:0 0;-webkit-text-stroke:0.35px #000;">BERBER SALONU</div>
<div style="left:254.80px;top:231px;font:bold 14px 'Liberation Sans';line-height:20px;color:#000;white-space:pre;transform:scaleX(0.8429);transform-origin:0 0;-webkit-text-stroke:0.35px #000;">GENEL</div>
<div style="left:1073.45px;top:231px;font:bold 14px 'Liberation Sans';line-height:20px;color:#000;white-space:pre;transform:scaleX(1.1100);transform-origin:0 0;-webkit-text-stroke:0.35px #000;">34,50</div>
<div style="left:1189.45px;top:231px;font:bold 14px 'Liberation Sans';line-height:20px;color:#000;white-space:pre;transform:scaleX(1.1100);transform-origin:0 0;-webkit-text-stroke:0.35px #000;">34,50</div>
<div style="left:5.40px;top:351px;font:bold 14px 'Liberation Sans';line-height:20px;color:#000;white-space:pre;transform:scaleX(0.9714);transform-origin:0 0;-webkit-text-stroke:0.35px #000;">ÇAMAŞIRHANE</div>
<div style="left:254.80px;top:351px;font:bold 14px 'Liberation Sans';line-height:20px;color:#000;white-space:pre;transform:scaleX(0.8429);transform-origin:0 0;-webkit-text-stroke:0.35px #000;">GENEL</div>
<div style="left:1082.33px;top:351px;font:bold 14px 'Liberation Sans';line-height:20px;color:#000;white-space:pre;transform:scaleX(1.1100);transform-origin:0 0;-webkit-text-stroke:0.35px #000;">0,00</div>
<div style="left:1198.33px;top:351px;font:bold 14px 'Liberation Sans';line-height:20px;color:#000;white-space:pre;transform:scaleX(1.1100);transform-origin:0 0;-webkit-text-stroke:0.35px #000;">0,00</div>
<div style="left:5.40px;top:471px;font:bold 14px 'Liberation Sans';line-height:20px;color:#000;white-space:pre;transform:scaleX(0.9623);transform-origin:0 0;-webkit-text-stroke:0.35px #000;">ÇAY OCAKLARI</div>
<div style="left:254.80px;top:471px;font:bold 14px 'Liberation Sans';line-height:20px;color:#000;white-space:pre;transform:scaleX(0.8429);transform-origin:0 0;-webkit-text-stroke:0.35px #000;">GENEL</div>
<div style="left:1064.57px;top:471px;font:bold 14px 'Liberation Sans';line-height:20px;color:#000;white-space:pre;transform:scaleX(1.1100);transform-origin:0 0;-webkit-text-stroke:0.35px #000;">419,38</div>
<div style="left:1180.57px;top:471px;font:bold 14px 'Liberation Sans';line-height:20px;color:#000;white-space:pre;transform:scaleX(1.1100);transform-origin:0 0;-webkit-text-stroke:0.35px #000;">419,38</div>
<div style="left:5.40px;top:567px;font:bold 14px 'Liberation Sans';line-height:20px;color:#000;white-space:pre;transform:scaleX(0.9034);transform-origin:0 0;-webkit-text-stroke:0.35px #000;">EGE YEMEK SALONU</div>
<div style="left:254.80px;top:567px;font:bold 14px 'Liberation Sans';line-height:20px;color:#000;white-space:pre;transform:scaleX(0.8429);transform-origin:0 0;-webkit-text-stroke:0.35px #000;">GENEL</div>
<div style="left:1082.33px;top:567px;font:bold 14px 'Liberation Sans';line-height:20px;color:#000;white-space:pre;transform:scaleX(1.1100);transform-origin:0 0;-webkit-text-stroke:0.35px #000;">0,00</div>
<div style="left:1198.33px;top:567px;font:bold 14px 'Liberation Sans';line-height:20px;color:#000;white-space:pre;transform:scaleX(1.1100);transform-origin:0 0;-webkit-text-stroke:0.35px #000;">0,00</div>
<div style="left:421.50px;top:61px;font:bold 14px 'Liberation Sans';line-height:20px;color:#000;white-space:pre;transform:scaleX(0.9721);transform-origin:0 0;-webkit-text-stroke:0.35px #000;">NAKİT</div>
<div style="left:421.50px;top:81px;font:bold 14px 'Liberation Sans';line-height:20px;color:#000;white-space:pre;transform:scaleX(0.9439);transform-origin:0 0;-webkit-text-stroke:0.35px #000;">VAKIFBANK</div>
<div style="left:421.50px;top:101px;font:bold 14px 'Liberation Sans';line-height:20px;color:#000;white-space:pre;transform:scaleX(1.0033);transform-origin:0 0;-webkit-text-stroke:0.35px #000;">ZİRAAT BANKASI KREDİ KARTI</div>
<div style="left:421.50px;top:121px;font:bold 14px 'Liberation Sans';line-height:20px;color:#000;white-space:pre;transform:scaleX(0.9927);transform-origin:0 0;-webkit-text-stroke:0.35px #000;">ZİRAAT BANKASI BANKA KARTI</div>
<div style="left:421.50px;top:141px;font:bold 14px 'Liberation Sans';line-height:20px;color:#000;white-space:pre;transform:scaleX(0.9794);transform-origin:0 0;-webkit-text-stroke:0.35px #000;">ZİRAAT BANKASI E CÜZDAN</div>
<div style="left:421.50px;top:161px;font:bold 14px 'Liberation Sans';line-height:20px;color:#000;white-space:pre;transform:scaleX(0.9964);transform-origin:0 0;-webkit-text-stroke:0.35px #000;">TİCARİ POS HESABI</div>
<div style="left:421.50px;top:181px;font:bold 14px 'Liberation Sans';line-height:20px;color:#000;white-space:pre;transform:scaleX(0.9721);transform-origin:0 0;-webkit-text-stroke:0.35px #000;">NAKİT</div>
<div style="left:421.50px;top:201px;font:bold 14px 'Liberation Sans';line-height:20px;color:#000;white-space:pre;transform:scaleX(0.9439);transform-origin:0 0;-webkit-text-stroke:0.35px #000;">VAKIFBANK</div>
<div style="left:421.50px;top:221px;font:bold 14px 'Liberation Sans';line-height:20px;color:#000;white-space:pre;transform:scaleX(1.0033);transform-origin:0 0;-webkit-text-stroke:0.35px #000;">ZİRAAT BANKASI KREDİ KARTI</div>
<div style="left:421.50px;top:241px;font:bold 14px 'Liberation Sans';line-height:20px;color:#000;white-space:pre;transform:scaleX(0.9927);transform-origin:0 0;-webkit-text-stroke:0.35px #000;">ZİRAAT BANKASI BANKA KARTI</div>
<div style="left:421.50px;top:261px;font:bold 14px 'Liberation Sans';line-height:20px;color:#000;white-space:pre;transform:scaleX(0.9794);transform-origin:0 0;-webkit-text-stroke:0.35px #000;">ZİRAAT BANKASI E CÜZDAN</div>
<div style="left:421.50px;top:281px;font:bold 14px 'Liberation Sans';line-height:20px;color:#000;white-space:pre;transform:scaleX(0.9964);transform-origin:0 0;-webkit-text-stroke:0.35px #000;">TİCARİ POS HESABI</div>
<div style="left:421.50px;top:301px;font:bold 14px 'Liberation Sans';line-height:20px;color:#000;white-space:pre;transform:scaleX(0.9721);transform-origin:0 0;-webkit-text-stroke:0.35px #000;">NAKİT</div>
<div style="left:421.50px;top:321px;font:bold 14px 'Liberation Sans';line-height:20px;color:#000;white-space:pre;transform:scaleX(0.9439);transform-origin:0 0;-webkit-text-stroke:0.35px #000;">VAKIFBANK</div>
<div style="left:421.50px;top:341px;font:bold 14px 'Liberation Sans';line-height:20px;color:#000;white-space:pre;transform:scaleX(1.0033);transform-origin:0 0;-webkit-text-stroke:0.35px #000;">ZİRAAT BANKASI KREDİ KARTI</div>
<div style="left:421.50px;top:361px;font:bold 14px 'Liberation Sans';line-height:20px;color:#000;white-space:pre;transform:scaleX(0.9927);transform-origin:0 0;-webkit-text-stroke:0.35px #000;">ZİRAAT BANKASI BANKA KARTI</div>
<div style="left:421.50px;top:381px;font:bold 14px 'Liberation Sans';line-height:20px;color:#000;white-space:pre;transform:scaleX(0.9794);transform-origin:0 0;-webkit-text-stroke:0.35px #000;">ZİRAAT BANKASI E CÜZDAN</div>
<div style="left:421.50px;top:401px;font:bold 14px 'Liberation Sans';line-height:20px;color:#000;white-space:pre;transform:scaleX(0.9964);transform-origin:0 0;-webkit-text-stroke:0.35px #000;">TİCARİ POS HESABI</div>
<div style="left:421.50px;top:421px;font:bold 14px 'Liberation Sans';line-height:20px;color:#000;white-space:pre;transform:scaleX(0.9721);transform-origin:0 0;-webkit-text-stroke:0.35px #000;">NAKİT</div>
<div style="left:421.50px;top:441px;font:bold 14px 'Liberation Sans';line-height:20px;color:#000;white-space:pre;transform:scaleX(0.9439);transform-origin:0 0;-webkit-text-stroke:0.35px #000;">VAKIFBANK</div>
<div style="left:421.50px;top:461px;font:bold 14px 'Liberation Sans';line-height:20px;color:#000;white-space:pre;transform:scaleX(1.0033);transform-origin:0 0;-webkit-text-stroke:0.35px #000;">ZİRAAT BANKASI KREDİ KARTI</div>
<div style="left:421.50px;top:481px;font:bold 14px 'Liberation Sans';line-height:20px;color:#000;white-space:pre;transform:scaleX(0.9927);transform-origin:0 0;-webkit-text-stroke:0.35px #000;">ZİRAAT BANKASI BANKA KARTI</div>
<div style="left:421.50px;top:501px;font:bold 14px 'Liberation Sans';line-height:20px;color:#000;white-space:pre;transform:scaleX(0.9794);transform-origin:0 0;-webkit-text-stroke:0.35px #000;">ZİRAAT BANKASI E CÜZDAN</div>
<div style="left:421.50px;top:521px;font:bold 14px 'Liberation Sans';line-height:20px;color:#000;white-space:pre;transform:scaleX(0.9964);transform-origin:0 0;-webkit-text-stroke:0.35px #000;">TİCARİ POS HESABI</div>
<div style="left:421.50px;top:541px;font:bold 14px 'Liberation Sans';line-height:20px;color:#000;white-space:pre;transform:scaleX(0.9721);transform-origin:0 0;-webkit-text-stroke:0.35px #000;">NAKİT</div>
<div style="left:421.50px;top:561px;font:bold 14px 'Liberation Sans';line-height:20px;color:#000;white-space:pre;transform:scaleX(0.9439);transform-origin:0 0;-webkit-text-stroke:0.35px #000;">VAKIFBANK</div>
<div style="left:421.50px;top:581px;font:bold 14px 'Liberation Sans';line-height:20px;color:#000;white-space:pre;transform:scaleX(1.0033);transform-origin:0 0;-webkit-text-stroke:0.35px #000;">ZİRAAT BANKASI KREDİ KARTI</div>
<div style="left:421.50px;top:601px;font:bold 14px 'Liberation Sans';line-height:20px;color:#000;white-space:pre;transform:scaleX(0.9927);transform-origin:0 0;-webkit-text-stroke:0.35px #000;">ZİRAAT BANKASI BANKA KARTI</div>
<div style="left:749.85px;top:281px;font:bold 14px 'Liberation Sans';line-height:20px;color:#000;white-space:pre;transform:scaleX(1.1100);transform-origin:0 0;-webkit-text-stroke:0.35px #000;">34,50</div>
<div style="left:740.97px;top:521px;font:bold 14px 'Liberation Sans';line-height:20px;color:#000;white-space:pre;transform:scaleX(1.1100);transform-origin:0 0;-webkit-text-stroke:0.35px #000;">419,38</div>
<div style="left:5.60px;top:21px;font:bold 14px 'Liberation Sans';line-height:20px;color:#000;white-space:pre;transform:scaleX(1.0101);transform-origin:0 0;-webkit-text-stroke:0.35px #000;">Kantin Adı</div>
<div style="left:255.20px;top:21px;font:bold 14px 'Liberation Sans';line-height:20px;color:#000;white-space:pre;transform:scaleX(1.0153);transform-origin:0 0;-webkit-text-stroke:0.35px #000;">Kasa Adı</div>
<div style="left:421.60px;top:21px;font:bold 14px 'Liberation Sans';line-height:20px;color:#000;white-space:pre;transform:scaleX(1.0596);transform-origin:0 0;-webkit-text-stroke:0.35px #000;">Aktarıldığı Yer</div>
<div style="left:739.40px;top:21px;font:bold 14px 'Liberation Sans';line-height:20px;color:#000;white-space:pre;transform:scaleX(1.1067);transform-origin:0 0;-webkit-text-stroke:0.35px #000;">Miktarı</div>
<div style="left:814.00px;top:21px;font:bold 14px 'Liberation Sans';line-height:20px;color:#000;white-space:pre;transform:scaleX(0.9820);transform-origin:0 0;-webkit-text-stroke:0.35px #000;">Belge No</div>
<div style="left:906.50px;top:21px;font:bold 14px 'Liberation Sans';line-height:20px;color:#000;white-space:pre;transform:scaleX(1.0237);transform-origin:0 0;-webkit-text-stroke:0.35px #000;">Belge Adedi</div>
<div style="left:1019.00px;top:21px;font:bold 14px 'Liberation Sans';line-height:20px;color:#000;white-space:pre;transform:scaleX(1.0444);transform-origin:0 0;-webkit-text-stroke:0.35px #000;">Kasa Toplamı</div>
<div style="left:1128.00px;top:21px;font:bold 14px 'Liberation Sans';line-height:20px;color:#000;white-space:pre;transform:scaleX(1.0417);transform-origin:0 0;-webkit-text-stroke:0.35px #000;">Kantin Toplam</div>
</div>
<div style="left:5px;top:739px;width:1323px;height:1px;background:#c8c8c8"></div>
<div style="left:5px;top:740px;width:1344px;height:1px;background:#fff"></div>
<div style="left:15px;top:750px;width:480px;height:19px;background:#a9a9a9;border:1px solid #6a6a6a"></div>
<div style="left:15px;top:771px;width:481px;height:80px;background:#f0f0f0"></div>
<div style="left:15px;top:771px;width:100px;height:19px;background:#f0f0f0;box-sizing:border-box;border-left:1px solid #a0a0a0;border-right:1px solid #a0a0a0;border-bottom:2px solid #a0a0a0;box-shadow:inset 1px 1px 0 #fff"></div>
<div style="left:15px;top:792px;width:100px;height:20px;background:#fff;box-sizing:border-box;border-right:1px solid #c8c8c8;border-bottom:1px solid #c8c8c8"></div>
<div style="left:15px;top:812px;width:100px;height:20px;background:#f0f0f0;box-sizing:border-box;border-right:1px solid #c8c8c8;border-bottom:1px solid #c8c8c8"></div>
<div style="left:15px;top:832px;width:100px;height:19px;background:#fff;box-sizing:border-box;border-right:1px solid #c8c8c8;border-bottom:1px solid #c8c8c8"></div>
<div style="left:115px;top:771px;width:125px;height:19px;background:#f0f0f0;box-sizing:border-box;border-right:1px solid #a0a0a0;border-bottom:2px solid #a0a0a0;box-shadow:inset 1px 1px 0 #fff"></div>
<div style="left:115px;top:792px;width:125px;height:20px;background:#fff;box-sizing:border-box;border-right:1px solid #c8c8c8;border-bottom:1px solid #c8c8c8"></div>
<div style="left:115px;top:812px;width:125px;height:20px;background:#f0f0f0;box-sizing:border-box;border-right:1px solid #c8c8c8;border-bottom:1px solid #c8c8c8"></div>
<div style="left:115px;top:832px;width:125px;height:19px;background:#fff;box-sizing:border-box;border-right:1px solid #c8c8c8;border-bottom:1px solid #c8c8c8"></div>
<div style="left:240px;top:771px;width:125px;height:19px;background:#f0f0f0;box-sizing:border-box;border-right:1px solid #a0a0a0;border-bottom:2px solid #a0a0a0;box-shadow:inset 1px 1px 0 #fff"></div>
<div style="left:240px;top:792px;width:125px;height:20px;background:#fff;box-sizing:border-box;border-right:1px solid #c8c8c8;border-bottom:1px solid #c8c8c8"></div>
<div style="left:240px;top:812px;width:125px;height:20px;background:#f0f0f0;box-sizing:border-box;border-right:1px solid #c8c8c8;border-bottom:1px solid #c8c8c8"></div>
<div style="left:240px;top:832px;width:125px;height:19px;background:#fff;box-sizing:border-box;border-right:1px solid #c8c8c8;border-bottom:1px solid #c8c8c8"></div>
<div style="left:365px;top:771px;width:125px;height:19px;background:#f0f0f0;box-sizing:border-box;border-right:1px solid #a0a0a0;border-bottom:2px solid #a0a0a0;box-shadow:inset 1px 1px 0 #fff"></div>
<div style="left:365px;top:792px;width:125px;height:20px;background:#fff;box-sizing:border-box;border-right:1px solid #c8c8c8;border-bottom:1px solid #c8c8c8"></div>
<div style="left:365px;top:812px;width:125px;height:20px;background:#f0f0f0;box-sizing:border-box;border-right:1px solid #c8c8c8;border-bottom:1px solid #c8c8c8"></div>
<div style="left:365px;top:832px;width:125px;height:19px;background:#fff;box-sizing:border-box;border-right:1px solid #c8c8c8;border-bottom:1px solid #c8c8c8"></div>
<div style="left:15px;top:790px;width:481px;height:1px;background:#fff"></div>
<div style="left:15px;top:791px;width:475px;height:1px;background:#c8c8c8"></div>
<div style="left:15px;top:791px;width:1px;height:60px;background:#c0c0c0"></div>
<div style="left:490px;top:771px;width:6px;height:19px;background:#f0f0f0;box-sizing:border-box;border-bottom:2px solid #b8b8b8;box-shadow:inset 1px 1px 0 #fff"></div>
<div style="left:490px;top:792px;width:6px;height:59px;background:#fff"></div>
<div style="left:490px;top:791px;width:6px;height:1px;background:#606060"></div>
<div style="left:490px;top:811px;width:6px;height:1px;background:#606060"></div>
<div style="left:490px;top:831px;width:6px;height:1px;background:#606060"></div>
<div style="left:545px;top:750px;width:480px;height:19px;background:#a9a9a9;border:1px solid #6a6a6a"></div>
<div style="left:545px;top:771px;width:481px;height:129px;background:#fff"></div>
<div style="left:545px;top:771px;width:481px;height:24px;background:#f0f0f0"></div>
<div style="left:545px;top:771px;width:319px;height:24px;background:#f0f0f0;box-sizing:border-box;border-right:1px solid #a0a0a0;border-bottom:2px solid #a8a8a8;box-shadow:inset 1px 1px 0 #fff"></div>
<div style="left:864px;top:771px;width:130px;height:24px;background:#f0f0f0;box-sizing:border-box;border-right:1px solid #a0a0a0;border-bottom:2px solid #a8a8a8;box-shadow:inset 1px 1px 0 #fff"></div>
<div style="left:994px;top:771px;width:32px;height:24px;background:#f0f0f0;box-sizing:border-box;border-bottom:2px solid #a8a8a8;box-shadow:inset 1px 1px 0 #fff"></div>
<div style="left:545px;top:795px;width:481px;height:1px;background:#fff"></div>
<div style="left:994px;top:796px;width:32px;height:1px;background:#6a6a6a"></div>
<div style="left:545px;top:797px;width:319px;height:24px;background:#fff;box-sizing:border-box;border-right:1px solid #c8c8c8;border-bottom:1px solid #c8c8c8"></div>
<div style="left:864px;top:797px;width:130px;height:24px;background:#fff;box-sizing:border-box;border-right:1px solid #c8c8c8;border-bottom:1px solid #c8c8c8"></div>
<div style="left:545px;top:771px;width:1px;height:129px;background:#a0a0a0"></div>
<div style="left:1065px;top:750px;width:139px;height:19px;background:#a9a9a9;border:1px solid #6a6a6a"></div>
<div style="left:1065px;top:770px;width:141px;height:24px;background:#808080"></div>
<div style="left:1066px;top:771px;width:139px;height:22px;background:#c0ffc0"></div>
<div style="left:15px;top:873px;width:16px;height:16px;background:#fff;box-sizing:border-box;border-top:1px solid #a0a0a0;border-left:1px solid #a0a0a0;border-right:1px solid #fff;border-bottom:1px solid #fff;box-shadow:inset 1px 1px 0 #696969,inset -1px -1px 0 #e3e3e3"></div>
<svg style="left:15px;top:873px" width="16" height="16" viewBox="0 0 16 16"><path d="M4.2 7 L6.3 11 L11.6 4" fill="none" stroke="#000" stroke-width="2.6" stroke-linecap="square" stroke-linejoin="miter"/></svg>
<div style="left:32.12px;top:10px;font:16px 'Liberation Sans';line-height:20px;color:#1e1e32;white-space:pre;transform:scaleX(0.8848);transform-origin:0 0;">Hasılat Ekranı</div>
<div style="left:17.10px;top:43px;font:bold 14px 'Liberation Sans';line-height:20px;color:#fff;white-space:pre;transform:scaleX(1.2356);transform-origin:0 0;">Hasılat Tarihi</div>
<div style="left:25.70px;top:67px;font:bold 14px 'Liberation Sans';line-height:20px;color:#000;white-space:pre;transform:scaleX(1.2652);transform-origin:0 0;-webkit-text-stroke:0.35px #000;">1 . 9 .2018</div>
<div style="left:17.10px;top:94px;font:bold 14px 'Liberation Sans';line-height:20px;color:#fff;white-space:pre;transform:scaleX(1.1886);transform-origin:0 0;">F5 - YENİLE</div>
<div style="left:263.40px;top:90px;font:bold 14px 'Liberation Sans';line-height:20px;color:#000;white-space:pre;transform:scaleX(1.1678);transform-origin:0 0;-webkit-text-stroke:0.35px #000;">EK-AH Yazdır</div>
<div style="left:645.30px;top:76px;font:bold 14px 'Liberation Sans';line-height:20px;color:#000;white-space:pre;transform:scaleX(1.2122);transform-origin:0 0;-webkit-text-stroke:0.35px #000;">Kasa Defterine</div>
<div style="left:662.90px;top:92px;font:bold 14px 'Liberation Sans';line-height:20px;color:#000;white-space:pre;transform:scaleX(1.2908);transform-origin:0 0;-webkit-text-stroke:0.35px #000;">Aktar (F8)</div>
<div style="left:828.20px;top:76px;font:bold 14px 'Liberation Sans';line-height:20px;color:#000;white-space:pre;transform:scaleX(1.2043);transform-origin:0 0;-webkit-text-stroke:0.35px #000;">Hasılat</div>
<div style="left:803.40px;top:92px;font:bold 14px 'Liberation Sans';line-height:20px;color:#000;white-space:pre;transform:scaleX(1.2651);transform-origin:0 0;-webkit-text-stroke:0.35px #000;">Listeleri (F9)</div>
<div style="left:943.00px;top:76px;font:bold 14px 'Liberation Sans';line-height:20px;color:#000;white-space:pre;transform:scaleX(1.2157);transform-origin:0 0;-webkit-text-stroke:0.35px #000;">Hasılat Tablosu</div>
<div style="left:949.50px;top:92px;font:bold 14px 'Liberation Sans';line-height:20px;color:#000;white-space:pre;transform:scaleX(1.2701);transform-origin:0 0;-webkit-text-stroke:0.35px #000;">Hazırla  (F10)</div>
<div style="left:1107.00px;top:89px;font:bold 14px 'Liberation Sans';line-height:20px;color:#000;white-space:pre;transform:scaleX(1.2282);transform-origin:0 0;-webkit-text-stroke:0.35px #000;">Çıkış (F12)</div>
<div style="left:191.80px;top:750px;font:bold 14px 'Liberation Sans';line-height:20px;color:#fff;white-space:pre;transform:scaleX(1.1437);transform-origin:0 0;">KASA BİLGİLERİ</div>
<div style="left:34.00px;top:771px;font:14px 'Liberation Sans';line-height:20px;color:#14142a;white-space:pre;transform:scaleX(1.1034);transform-origin:0 0;">Açıklama</div>
<div style="left:196.75px;top:771px;font:14px 'Liberation Sans';line-height:20px;color:#14142a;white-space:pre;transform:scaleX(1.1516);transform-origin:0 0;">Nakit</div>
<div style="left:313.69px;top:771px;font:14px 'Liberation Sans';line-height:20px;color:#14142a;white-space:pre;transform:scaleX(1.1128);transform-origin:0 0;">Banka</div>
<div style="left:431.30px;top:771px;font:14px 'Liberation Sans';line-height:20px;color:#14142a;white-space:pre;transform:scaleX(1.1600);transform-origin:0 0;">Toplam</div>
<div style="left:40.60px;top:792px;font:bold 14px 'Liberation Sans';line-height:20px;color:#000;white-space:pre;transform:scaleX(1.1091);transform-origin:0 0;-webkit-text-stroke:0.35px #000;">GİREN</div>
<div style="left:165.40px;top:792px;font:bold 14px 'Liberation Sans';line-height:20px;color:#000;white-space:pre;transform:scaleX(1.2545);transform-origin:0 0;-webkit-text-stroke:0.35px #000;">7.801,36</div>
<div style="left:270.50px;top:792px;font:bold 14px 'Liberation Sans';line-height:20px;color:#000;white-space:pre;transform:scaleX(1.2521);transform-origin:0 0;-webkit-text-stroke:0.35px #000;">752.465,84</div>
<div style="left:395.60px;top:792px;font:bold 14px 'Liberation Sans';line-height:20px;color:#000;white-space:pre;transform:scaleX(1.2700);transform-origin:0 0;-webkit-text-stroke:0.35px #000;">760.267,20</div>
<div style="left:40.20px;top:812px;font:bold 14px 'Liberation Sans';line-height:20px;color:#000;white-space:pre;transform:scaleX(1.1182);transform-origin:0 0;-webkit-text-stroke:0.35px #000;">ÇIKAN</div>
<div style="left:180.50px;top:812px;font:bold 14px 'Liberation Sans';line-height:20px;color:#000;white-space:pre;transform:scaleX(1.2535);transform-origin:0 0;-webkit-text-stroke:0.35px #000;">650,74</div>
<div style="left:280.70px;top:812px;font:bold 14px 'Liberation Sans';line-height:20px;color:#000;white-space:pre;transform:scaleX(1.2492);transform-origin:0 0;-webkit-text-stroke:0.35px #000;">24.545,45</div>
<div style="left:406.00px;top:812px;font:bold 14px 'Liberation Sans';line-height:20px;color:#000;white-space:pre;transform:scaleX(1.2661);transform-origin:0 0;-webkit-text-stroke:0.35px #000;">25.196,19</div>
<div style="left:39.50px;top:832px;font:bold 14px 'Liberation Sans';line-height:20px;color:#000;white-space:pre;transform:scaleX(1.0306);transform-origin:0 0;-webkit-text-stroke:0.35px #000;">KALAN</div>
<div style="left:165.40px;top:832px;font:bold 14px 'Liberation Sans';line-height:20px;color:#000;white-space:pre;transform:scaleX(1.2545);transform-origin:0 0;-webkit-text-stroke:0.35px #000;">7.150,62</div>
<div style="left:270.50px;top:832px;font:bold 14px 'Liberation Sans';line-height:20px;color:#000;white-space:pre;transform:scaleX(1.2700);transform-origin:0 0;-webkit-text-stroke:0.35px #000;">727.920,39</div>
<div style="left:395.60px;top:832px;font:bold 14px 'Liberation Sans';line-height:20px;color:#000;white-space:pre;transform:scaleX(1.2629);transform-origin:0 0;-webkit-text-stroke:0.35px #000;">735.071,01</div>
<div style="left:739.60px;top:750px;font:bold 14px 'Liberation Sans';line-height:20px;color:#fff;white-space:pre;transform:scaleX(1.0568);transform-origin:0 0;">TOPLAMLAR</div>
<div style="left:554.20px;top:773px;font:14px 'Liberation Sans';line-height:20px;color:#14142a;white-space:pre;transform:scaleX(1.1618);transform-origin:0 0;">Toplam Adı</div>
<div style="left:934.60px;top:773px;font:14px 'Liberation Sans';line-height:20px;color:#14142a;white-space:pre;transform:scaleX(1.1600);transform-origin:0 0;">Toplam</div>
<div style="left:551.90px;top:797px;font:bold 14px 'Liberation Sans';line-height:20px;color:#000;white-space:pre;transform:scaleX(1.1372);transform-origin:0 0;-webkit-text-stroke:0.35px #000;">TİCARİ POS HESABI</div>
<div style="left:920.00px;top:797px;font:bold 14px 'Liberation Sans';line-height:20px;color:#000;white-space:pre;transform:scaleX(1.2327);transform-origin:0 0;-webkit-text-stroke:0.35px #000;">1.155,09</div>
<div style="left:1075.60px;top:750px;font:bold 14px 'Liberation Sans';line-height:20px;color:#fff;white-space:pre;transform:scaleX(1.0855);transform-origin:0 0;">GENEL TOPLAM</div>
<div style="left:1142.40px;top:770px;font:bold 14px 'Liberation Sans';line-height:20px;color:#000;white-space:pre;transform:scaleX(1.1236);transform-origin:0 0;-webkit-text-stroke:0.35px #000;">1.155,09</div>
<div style="left:39.70px;top:871px;font:bold 14px 'Liberation Sans';line-height:20px;color:#000;white-space:pre;transform:scaleX(1.1994);transform-origin:0 0;-webkit-text-stroke:0.35px #000;">ENTER tuşuna basılınca imleç aşağıya doğru kaysın</div>
</body></html>
